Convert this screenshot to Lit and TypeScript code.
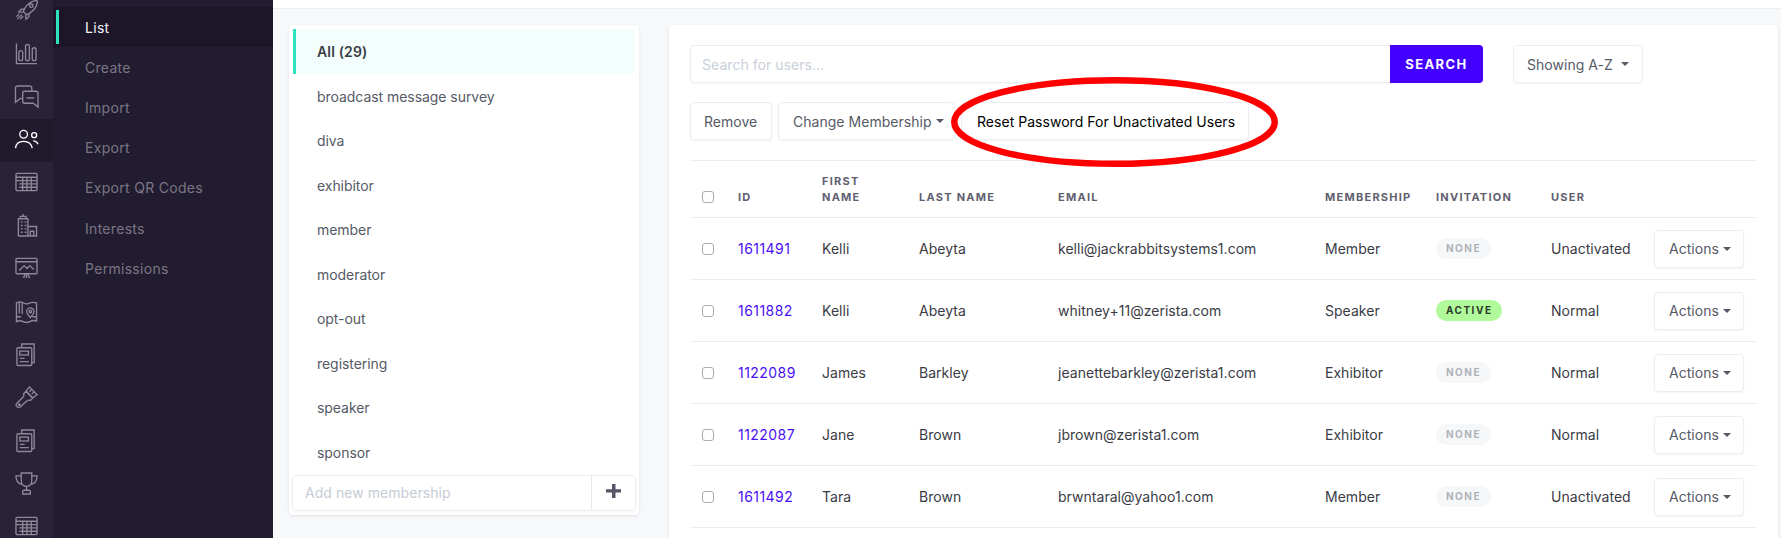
import { LitElement, html, css, svg } from "lit";
import { customElement } from "lit/decorators.js";

const icons: Record<string, unknown> = {
  rocket: svg`<path d="M22.500 1.500c-5 .6-9.500 3.600-12.500 8.500l-1.500 3 3.500 3.500 3-1.500c4.900-3 7.900-7.500 8.500-12.500Z"/><circle cx="17" cy="7" r="1.800"/><path d="M10 10.500H6.500L4 13.500l4 .5M14.500 15v3.500L11.500 21l-.5-4M7 16.500 2.500 21M4.500 15.500 1.500 18.500M8.500 18 5.500 21"/>`,
  chart: svg`<path d="M1.500 1.500v21h21.500"/><rect x="4" y="9" width="4" height="10.500" rx="2"/><rect x="11" y="2.500" width="4" height="17" rx="2"/><rect x="18" y="6" width="4" height="13.500" rx="2"/>`,
  chat: svg`<path d="M17.500 6V3a2 2 0 0 0-2-2H2.500a2 2 0 0 0-2 2v15l5-4h3"/><path d="M10 6.500h12a2 2 0 0 1 2 2v14.500l-5-4H10a2 2 0 0 1-2-2v-8.500a2 2 0 0 1 2-2Z"/><path d="M12 13.500h8"/>`,
  users: svg`<circle cx="9" cy="6.500" r="4"/><circle cx="20" cy="7.500" r="2.600"/><path d="M.5 21c.5-4.500 3.800-7 8.500-7s8 2.500 9 7M19 13.500c2.200 0 4 1.200 5 3.500"/>`,
  table: svg`<rect x="1" y="2.500" width="22" height="18" rx="1.500"/><path d="M1 6.500h22M4.500 10H23M4.500 13.500H23M4.500 17H23M8 6.500v14M12.500 6.500v14M17 6.500v14M1 10h3.500"/>`,
  building: svg`<path d="M3.500 23V5h10v18M5.500 5V2.500h6V5M8.500 2.500V0M3.500 23h19v-10h-9M6 8.500h2M10 8.500h2M6 12h2M10 12h2M6 15.500h2M10 15.500h2M6 19h2M10 19h2M16 23v-5h3.500v5"/>`,
  present: svg`<rect x="1" y="1.500" width="22" height="16" rx="1"/><path d="M1 5h22M4.500 14l5-5 3 3 3-3 4 4M9 22l1.500-4.500M15 22l-1.500-4.500M12 17.500V22"/>`,
  map: svg`<path d="M1.500 3c2-1 5-1 7 0s4 1.500 6 .5 5-1.500 8-.5v19c-2.500-1-5-.5-7 .5s-5 1-7 0-5-1-7 0ZM1.500 17.500h5M18 17.500h4.500"/><path d="M4.500 3v11M7.500 3.500v11"/><path d="M16 18.500c-2-2.500-3.800-4.300-3.800-6.500a3.800 3.800 0 0 1 7.600 0c0 2.200-1.800 4-3.800 6.500Z"/><circle cx="16" cy="12" r="1.300"/>`,
  doc: svg`<path d="M7 4.500V1h13v19.500h-2.500"/><rect x="2" y="5" width="15.500" height="18.500" rx="1"/><rect x="5" y="8.500" width="9" height="4"/><path d="M5 16h5M5 19.500h9.500"/>`,
  brush: svg`<path d="m15 1 8 8-4.500 3.500-7-7ZM17.500 3.500 15 6M20 6 17.500 8.500"/><path d="m11.500 5.500 7 7-2.500 2.500c-1.500-.5-2.500-.5-3.500.5L6 21.500c-1 1-3 1-4 0s-1-2.500 0-3.500l6.500-6.500c1-1 1-2 .5-3.500Z"/><circle cx="4.500" cy="19.500" r=".8"/>`,
  trophy: svg`<path d="M6.500 1h11v8.500c0 3.500-2.500 5.500-5.500 5.500s-5.500-2-5.500-5.500ZM6.500 4H1c0 5 1.500 8 6 9M17.500 4H23c0 5-1.500 8-6 9M12 15v4M8 23v-2.500A1.500 1.500 0 0 1 9.500 19h5a1.500 1.500 0 0 1 1.500 1.500V23Z"/>`,
};

const railItems = ["rocket", "chart", "chat", "users", "table", "building", "present", "map", "doc", "brush", "doc", "trophy", "table"];
const subItems = ["List", "Create", "Import", "Export", "Export QR Codes", "Interests", "Permissions"];
const memberships = ["broadcast message survey", "diva", "exhibitor", "member", "moderator", "opt-out", "registering", "speaker", "sponsor"];
const users = [
  ["1611491", "Kelli", "Abeyta", "kelli@jackrabbitsystems1.com", "Member", "NONE", "Unactivated"],
  ["1611882", "Kelli", "Abeyta", "whitney+11@zerista.com", "Speaker", "ACTIVE", "Normal"],
  ["1122089", "James", "Barkley", "jeanettebarkley@zerista1.com", "Exhibitor", "NONE", "Normal"],
  ["1122087", "Jane", "Brown", "jbrown@zerista1.com", "Exhibitor", "NONE", "Normal"],
  ["1611492", "Tara", "Brown", "brwntaral@yahoo1.com", "Member", "NONE", "Unactivated"],
];

@customElement("app-root")
export class AppRoot extends LitElement {
  static styles = css`
    :host { display: block; width: 1781px; height: 538px; overflow: hidden; font-family: Inter, "Noto Sans", sans-serif; font-size: 14px; color: #3a3b45; }
    * { box-sizing: border-box; }
    .shell { display: grid; grid-template-columns: 53px 220px 1fr; height: 538px; overflow: hidden; }
    .rail { background: #2a2239; margin-top: -10px; height: 548px; overflow: hidden; color: #8d8998; }
    .rail-item { height: 43px; display: flex; align-items: center; justify-content: center; padding-bottom: 3px; }
    .rail-item.on { background: #201a2c; color: #fff; }
    .rail svg { width: 23px; height: 23px; fill: none; stroke: currentColor; stroke-width: 1.4; display: block; overflow: visible; }
    .sub { background: #221c30; padding-top: 7px; }
    .sub-item { height: 40.2px; display: flex; align-items: center; padding-left: 32px; color: #7a7684; letter-spacing: .3px; position: relative; }
    .sub-item.on { background: #1c1628; color: #f4f4f6; }
    .sub-item.on::before { content: ""; position: absolute; left: 3px; top: 3px; bottom: 3px; width: 3px; background: #2de3bd; }
    .main { background: #f7f8fa; overflow: hidden; height: 538px; }
    .top { height: 9px; background: #fff; border-bottom: 1px solid #eceef1; }
    .content { display: flex; align-items: flex-start; gap: 30px; padding: 16px 3px 0 16px; }
    .card { background: #fff; border-radius: 4px; box-shadow: 0 1px 3px rgba(30, 35, 60, .1); }
    .mem { width: 350px; height: 490px; padding: 4px; flex: none; display: flex; flex-direction: column; }
    .mem-item { height: 44.5px; display: flex; align-items: center; padding-left: 24px; color: #565a66; letter-spacing: -.05px; flex: none; }
    .mem-item.on { height: 45px; background: #f3fdfb; border-left: 3px solid #2de3bd; padding-left: 21px; font-weight: 600; color: #3a3d47; letter-spacing: .15px; }
    .add { margin: auto 0 0 -1px; width: 344px; height: 38px; display: flex; border: 1px solid #eceef1; border-radius: 4px; box-shadow: 0 1px 2px rgba(0,0,0,.04); }
    .add-text { flex: 1; padding-left: 12px; display: flex; align-items: center; color: #c5ccd6; letter-spacing: .05px; border-right: 1px solid #e6e8ec; }
    .add-btn { width: 43px; display: flex; align-items: center; justify-content: center; padding-bottom: 3px; }
    .add-btn svg { width: 15px; height: 14px; fill: #555566; display: block; }
    .panel { flex: 1; height: 560px; padding: 20px 21px 0 21px; position: relative; }
    .row { display: flex; align-items: stretch; }
    .search { display: flex; width: 793px; height: 38px; border: 1px solid #eceef1; border-radius: 4px; box-shadow: 0 1px 2px rgba(0,0,0,.04); }
    .search-text { flex: 1; padding-left: 11px; display: flex; align-items: center; color: #c8d0da; letter-spacing: .05px; }
    .search-btn { width: 93px; margin: -1px -1px -1px 0; background: #4300ff; color: #fff; font-size: 13px; font-weight: 700; letter-spacing: 1.4px; display: flex; align-items: center; justify-content: center; border-radius: 0 4px 4px 0; }
    .btn { height: 38px; display: inline-flex; align-items: center; padding: 0 13px; border: 1px solid #eceef1; border-radius: 4px; background: #fff; color: #565a66; box-shadow: 0 1px 2px rgba(0,0,0,.05); letter-spacing: .03px; white-space: nowrap; }
    .caret { width: 0; height: 0; border: 4px solid transparent; border-top-color: #565a66; border-bottom: 0; margin-left: 4px; }
    .showing { margin-left: 30px; width: 130px; padding: 0 13px; }
    .showing .caret { margin-left: 8px; }
    .actions-row { margin-top: 19px; gap: 6px; }
    .remove { width: 82px; }
    .change { width: 177px; padding: 0 14px; }
    .reset { color: #000; padding: 0 0 0 15px; width: 288px; }
    .table { margin-top: 20px; width: 1067px; border-top: 1px solid #eceef1; }
    .tr { display: grid; grid-template-columns: 48px 84px 97px 139px 267px 111px 115px 103px 103px; align-items: center; height: 62px; border-bottom: 1px solid #eceef1; letter-spacing: .03px; white-space: nowrap; }
    .th { height: 57px; align-items: end; padding-bottom: 12px; font-size: 11px; font-weight: 700; letter-spacing: 1.25px; color: #5f6070; line-height: 16px; }
    .th .chk { margin-bottom: 2px; }
    .chk { appearance: none; margin: 0 0 0 12px; width: 12px; height: 12px; border: 1px solid #a9a9ae; border-radius: 3px; background: #fff; display: block; }
    .id { color: #4a10f5; letter-spacing: .45px; }
    .badge { display: inline-block; height: 21px; line-height: 21px; border-radius: 11px; padding: 0 10px; font-size: 10px; font-weight: 700; letter-spacing: 1.5px; }
    .badge.NONE { background: #f6f7f9; color: #b0b2b9; }
    .badge.ACTIVE { background: #b0fa9b; color: #2b3a2a; }
    .act { width: 90px; padding: 0 14px; }
    .ring { position: absolute; left: 282px; top: 52px; width: 327px; height: 90px; overflow: visible; fill: none; stroke: #f00; stroke-width: 6.500; pointer-events: none; }
  `;

  render() {
    return html`<div class="shell">
      <nav class="rail">
        ${railItems.map((n, i) => html`<div class="rail-item ${i === 3 ? "on" : ""}"><svg viewBox="0 0 24 24">${icons[n]}</svg></div>`)}
      </nav>
      <nav class="sub">
        ${subItems.map((n, i) => html`<div class="sub-item ${i === 0 ? "on" : ""}">${n}</div>`)}
      </nav>
      <main class="main">
        <div class="top"></div>
        <div class="content">
          <section class="card mem">
            <div class="mem-item on">All (29)</div>
            ${memberships.map((m) => html`<div class="mem-item">${m}</div>`)}
            <div class="add">
              <div class="add-text">Add new membership</div>
              <div class="add-btn"><svg viewBox="0 0 15 14"><path d="M6 0h3.500v5.200H15v3.400H9.500V14H6V8.600H0V5.200h6Z"/></svg></div>
            </div>
          </section>
          <section class="card panel">
            <div class="row">
              <div class="search"><div class="search-text">Search for users...</div><div class="search-btn">SEARCH</div></div>
              <div class="btn showing">Showing A-Z<span class="caret"></span></div>
            </div>
            <div class="row actions-row">
              <div class="btn remove">Remove</div>
              <div class="btn change">Change Membership<span class="caret"></span></div>
              <div class="btn reset">Reset Password For Unactivated Users</div>
            </div>
            <div class="table">
              <div class="tr th">
                <input class="chk" type="checkbox" />
                <span>ID</span><span>FIRST<br />NAME</span><span>LAST NAME</span><span>EMAIL</span><span>MEMBERSHIP</span><span>INVITATION</span><span>USER</span><span></span>
              </div>
              ${users.map((u) => html`<div class="tr">
                <input class="chk" type="checkbox" />
                <span class="id">${u[0]}</span><span>${u[1]}</span><span>${u[2]}</span><span>${u[3]}</span><span>${u[4]}</span>
                <span><span class="badge ${u[5]}">${u[5]}</span></span>
                <span>${u[6]}</span>
                <div class="btn act">Actions<span class="caret"></span></div>
              </div>`)}
            </div>
            <svg class="ring" viewBox="0 0 327 90"><ellipse cx="163.500" cy="45" rx="160.250" ry="41.750"/></svg>
          </section>
        </div>
      </main>
    </div>`;
  }
}
